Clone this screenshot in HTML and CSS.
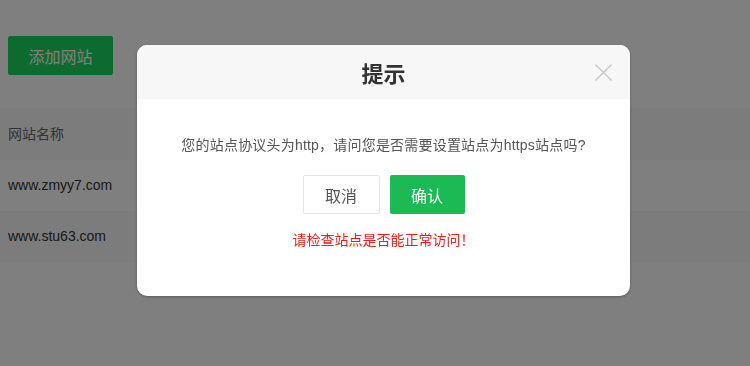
FILE: index.html
```html
<!DOCTYPE html>
<html lang="zh-CN">
<head>
    <meta charset="UTF-8">
    <meta name="viewport" content="width=device-width, initial-scale=1.0">
    <title>网站管理</title>
    <link rel="stylesheet" href="styles.css">
</head>
<body>
    <div class="page">
        <div class="toolbar">
            <button class="add-button">添加网站</button>
        </div>

        <div class="site-table">
            <div class="row head">网站名称</div>
            <div class="row">www.zmyy7.com</div>
            <div class="row striped">www.stu63.com</div>
        </div>
    </div>

    <div class="mask"></div>

    <div class="dialog">
        <div class="dialog-head">
            <span class="dialog-title">提示</span>
            <svg class="close-icon" viewBox="0 0 20 20" fill="none" xmlns="http://www.w3.org/2000/svg">
                <path d="M1.5 1.5L18.5 18.5M18.5 1.5L1.5 18.5" stroke="currentColor" stroke-width="1.5"/>
            </svg>
        </div>
        <div class="dialog-body">
            <p class="message">您的站点协议头为http，请问您是否需要设置站点为https站点吗?</p>
            <div class="actions">
                <button class="cancel-button">取消</button>
                <button class="ok-button">确认</button>
            </div>
            <p class="warning">请检查站点是否能正常访问！</p>
        </div>
    </div>
</body>
</html>
```

FILE: styles.css
```css
body {
    margin: 0;
    font-family: "Liberation Sans", "Noto Sans CJK SC", sans-serif;
    background-color: #fff;
    color: #333;
}
.page {
    height: 366px;
}
.toolbar {
    padding: 36px 8px 0;
    height: 72px;
    box-sizing: border-box;
}
.add-button {
    width: 105px;
    height: 39px;
    border: none;
    border-radius: 2px;
    background-color: #1cd55c;
    color: #fff;
    font-family: inherit;
    font-size: 16px;
    padding: 0;
}
.site-table {
    margin-top: 36px;
}
.row {
    height: 51px;
    line-height: 51px;
    padding-left: 8px;
    font-size: 14px;
    color: #333;
}
.row.head {
    height: 52px;
    line-height: 52px;
    background-color: #f8f8f8;
    color: #666;
}
.row.striped {
    background-color: #f8f8f8;
}
.mask {
    position: fixed;
    inset: 0;
    background-color: rgba(0, 0, 0, 0.5);
}
.dialog {
    position: fixed;
    left: 137px;
    top: 45px;
    width: 493px;
    height: 251px;
    background-color: #fff;
    border-radius: 10px;
    overflow: hidden;
    box-shadow: 0 1px 3px rgba(0, 0, 0, 0.3);
}
.dialog-head {
    position: relative;
    height: 54px;
    background-color: #f7f7f7;
    display: flex;
    align-items: center;
    justify-content: center;
}
.dialog-title {
    font-size: 22px;
    font-weight: bold;
    color: #333;
}
.close-icon {
    position: absolute;
    right: 17px;
    top: 18px;
    width: 19px;
    height: 19px;
    color: #c8c8c8;
}
.dialog-body {
    text-align: center;
    padding-top: 36px;
}
.message {
    margin: 0;
    font-size: 14px;
    line-height: 20px;
    letter-spacing: 0.2px;
    color: #555;
}
.actions {
    display: flex;
    justify-content: center;
    gap: 10px;
    margin-top: 20px;
}
.cancel-button,
.ok-button {
    height: 39px;
    border-radius: 2px;
    font-family: inherit;
    font-size: 16px;
    padding: 0;
}
.cancel-button {
    width: 77px;
    background-color: #fff;
    border: 1px solid #e6e6e6;
    color: #555;
}
.ok-button {
    width: 75px;
    background-color: #1bba55;
    border: none;
    color: #fff;
}
.warning {
    margin: 16px 0 0;
    font-size: 14px;
    line-height: 20px;
    color: #f21b1b;
}
```
